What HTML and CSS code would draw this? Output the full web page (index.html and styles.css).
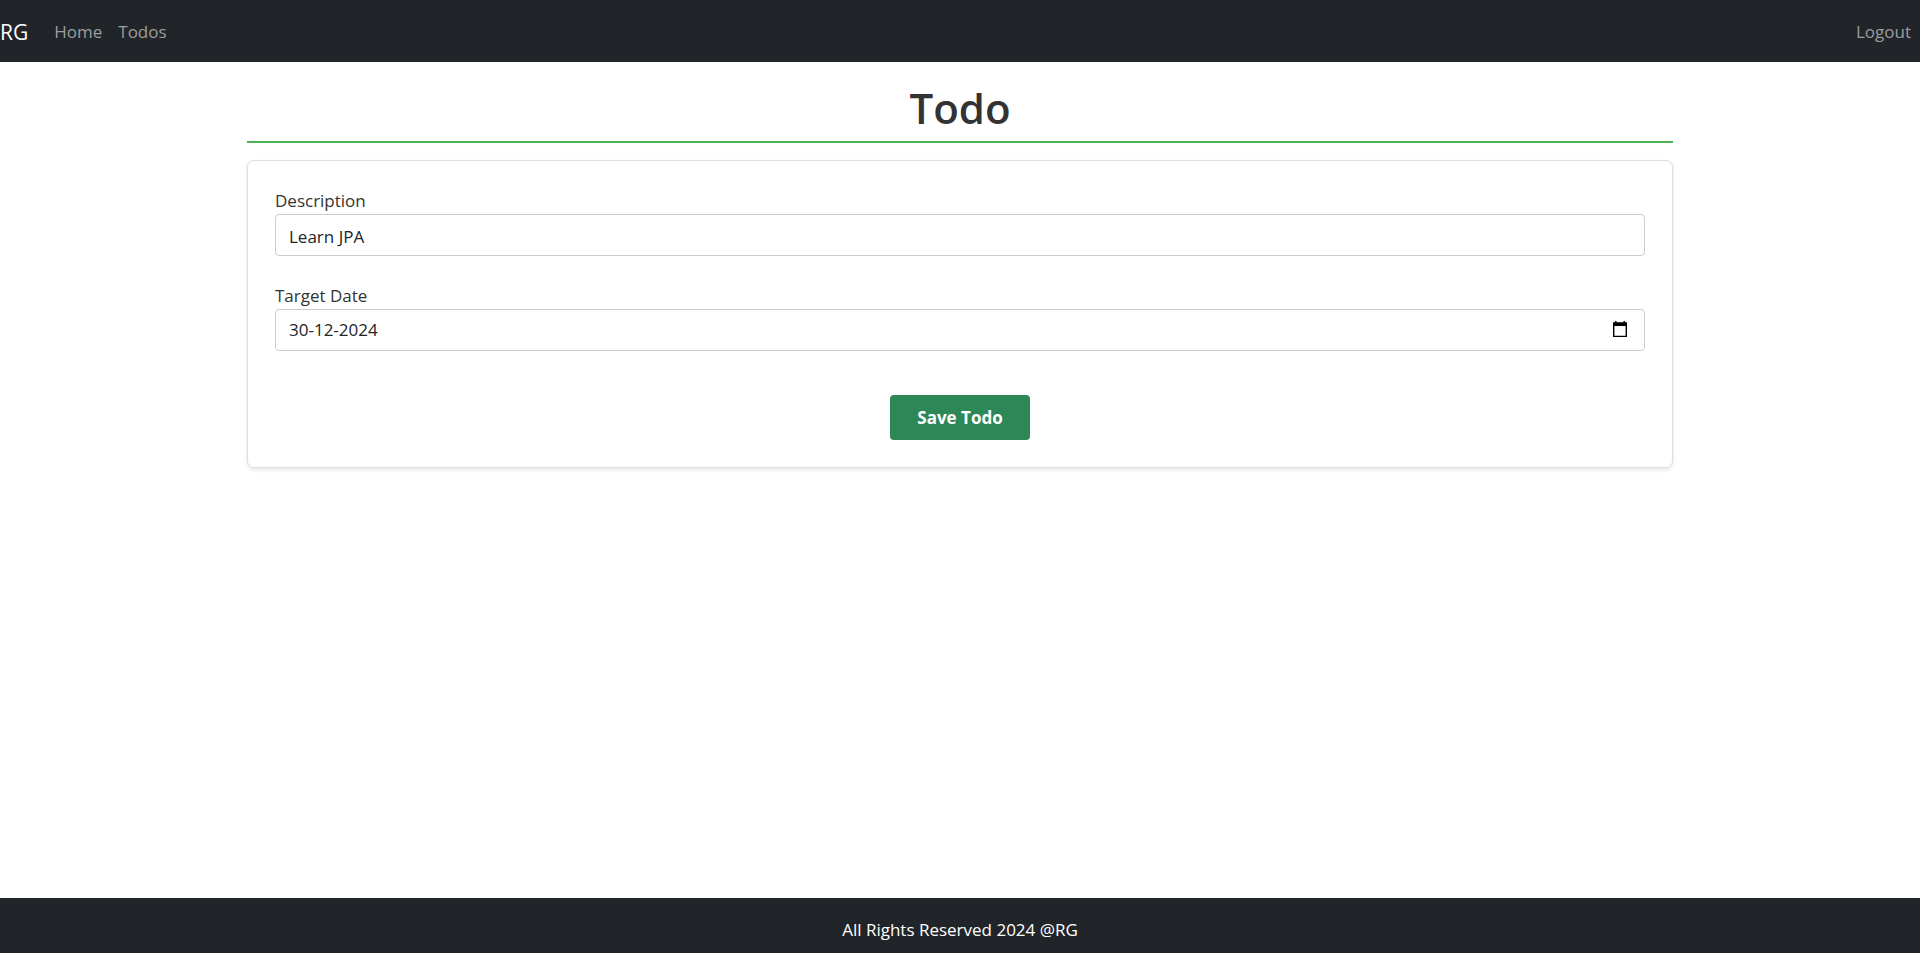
FILE: index.html
```html
<!DOCTYPE html>
<html lang="en">
<head>
<meta charset="utf-8">
<meta name="viewport" content="width=device-width, initial-scale=1">
<title>Todo</title>
<link rel="stylesheet" href="styles.css">
</head>
<body class="page">
<nav class="navbar">
  <a class="brand" href="#">RG</a>
  <a class="nav-link" href="#">Home</a>
  <a class="nav-link" href="#">Todos</a>
  <a class="nav-link nav-end" href="#">Logout</a>
</nav>
<main class="container">
  <h1 class="title">Todo</h1>
  <form class="card">
    <div class="field">
      <label class="label" for="description">Description</label>
      <input class="input" id="description" type="text" value="Learn JPA">
    </div>
    <div class="field">
      <label class="label" for="target-date">Target Date</label>
      <div class="input date-box">
        <input class="date-input" id="target-date" type="text" inputmode="numeric" value="30-12-2024">
        <button class="date-button" type="button" aria-label="Choose date">
          <svg class="date-icon" viewBox="0 0 14 16" width="14" height="16" aria-hidden="true"><path fill="#000" fill-rule="evenodd" d="M2 0h1.500v1.300h7V0H12v1.300h2V16H0V1.300h2zM1.400 5v9.700h11.200V5z"/></svg>
        </button>
      </div>
    </div>
    <button class="save" type="button">Save Todo</button>
  </form>
</main>
<footer class="footer">All Rights Reserved 2024 @RG</footer>
</body>
</html>
```
FILE: styles.css
```css
* {
  box-sizing: border-box;
}

.page {
  margin: 0;
  min-height: 100vh;
  display: flex;
  flex-direction: column;
  background: #fff;
  color: #333;
  font: 17px/26px "Open Sans", "Noto Sans", sans-serif;
}

.navbar {
  display: flex;
  align-items: center;
  height: 62px;
  padding-top: 2px;
  padding-right: 9px;
  background: #212529;
}

.brand {
  margin-right: 26px;
  color: #fff;
  font-size: 21px;
  text-decoration: none;
}

.nav-link {
  margin-right: 16px;
  color: #9b9d9e;
  text-decoration: none;
}

.nav-end {
  margin-left: auto;
  margin-right: 0;
}

.container {
  flex: 1;
  width: 100%;
  max-width: 1426px;
  margin: 0 auto;
}

.title {
  margin: 19px 0 17px;
  padding-bottom: 6px;
  border-bottom: 2px solid #4caf50;
  font-size: 42px;
  line-height: 54px;
  font-weight: 600;
  text-align: center;
}

.card {
  display: flex;
  flex-direction: column;
  padding: 27px;
  border: 1px solid #ddd;
  border-radius: 7px;
  box-shadow: 0 2px 4px rgba(0, 0, 0, 0.1);
}

.field {
  display: flex;
  flex-direction: column;
  margin-bottom: 27px;
}

.label {
  align-self: flex-start;
}

.input {
  width: 100%;
  height: 42px;
  padding: 2px 13px 0;
  border: 1px solid #ccc;
  border-radius: 4px;
  background: #fff;
  color: #212529;
  font: inherit;
}

.date-box {
  display: flex;
  align-items: center;
  padding-top: 0;
  padding-right: 17px;
}

.date-input {
  flex: 1;
  min-width: 0;
  padding: 0;
  border: 0;
  outline: 0;
  background: none;
  color: inherit;
  font: inherit;
}

.date-button {
  display: flex;
  padding: 0 0 2px;
  border: 0;
  background: none;
}

.save {
  align-self: center;
  margin-top: 17px;
  width: 140px;
  height: 45px;
  padding: 0;
  border: 0;
  border-radius: 4px;
  background: #2e8757;
  color: #fff;
  font: inherit;
  font-weight: 700;
}

.footer {
  height: 55px;
  padding-top: 19px;
  background: #212529;
  color: #fff;
  text-align: center;
}
```
